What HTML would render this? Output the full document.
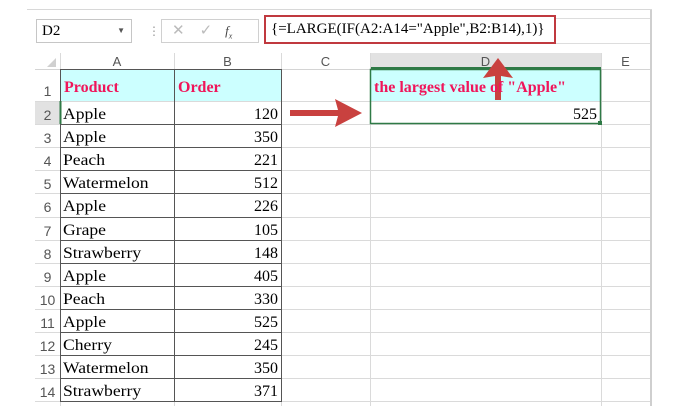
<!DOCTYPE html><html><head><style>
body{margin:0;width:680px;height:416px;background:#fff;position:relative;overflow:hidden;font-family:"Liberation Serif",serif}
.a{position:absolute}
.hd{font-family:"Liberation Sans",sans-serif;color:#555;font-size:13px;text-align:center}
.c{position:absolute;font-size:16px;color:#000;line-height:23px;height:23px;box-sizing:border-box;white-space:nowrap}
</style></head><body>
<div class="a" style="left:27px;top:9px;width:625px;height:1px;background:#d8d8d8"></div>
<div class="a" style="left:36px;top:19px;width:96px;height:24px;border:1px solid #c6c6c6;box-sizing:border-box;font-family:'Liberation Serif';font-size:15px;line-height:22px;padding-left:5px">D2<span style="position:absolute;right:6px;font-size:8px;color:#555">▼</span></div>
<div class="a" style="left:148px;top:24px;color:#999;font-size:12px">⋮</div>
<div class="a" style="left:161px;top:19px;width:98px;height:24px;border:1px solid #d0d0d0;box-sizing:border-box;color:#bbb;font-family:'Liberation Sans';font-size:15px;line-height:22px"><span style="margin-left:10px">✕</span><span style="margin-left:15px">✓</span><span style="margin-left:13px;color:#444;font-style:italic;font-family:'Liberation Serif';font-size:13px">f<sub style="font-size:8px">x</sub></span></div>
<div class="a" style="left:264px;top:15px;width:292px;height:29px;border:2px solid #c0393f;box-sizing:border-box;background:#fff;font-size:15px;line-height:25px;padding-left:5px">{=LARGE(IF(A2:A14="Apple",B2:B14),1)}</div>
<div class="a" style="left:556px;top:18px;width:94px;height:24px;border-top:1px solid #ddd;border-bottom:1px solid #ddd"></div>
<div class="a" style="left:650px;top:10px;width:2px;height:396px;background:#cfcfcf"></div>
<div class="a" style="left:35px;top:53px;width:615px;height:16px;background:#fff;border-bottom:1px solid #d4d4d4"></div>
<div class="a" style="left:370px;top:53px;width:231px;height:16px;background:#e2e2e2;border-bottom:2px solid #2f7a46;box-sizing:border-box"></div>
<div class="a" style="left:47px;top:58px;width:0;height:0;border-left:9px solid transparent;border-bottom:9px solid #d0d0d0"></div>
<div class="a hd" style="left:60px;top:54px;width:114px;line-height:16px">A</div>
<div class="a hd" style="left:174px;top:54px;width:107px;line-height:16px">B</div>
<div class="a hd" style="left:281px;top:54px;width:89px;line-height:16px">C</div>
<div class="a hd" style="left:370px;top:54px;width:231px;line-height:16px">D</div>
<div class="a hd" style="left:601px;top:54px;width:49px;line-height:16px">E</div>
<svg class="a" style="left:0;top:0" width="680" height="416">
<g stroke="#dadada" stroke-width="1">
<line x1="60.5" y1="53" x2="60.5" y2="406"/><line x1="174.5" y1="53" x2="174.5" y2="406"/><line x1="281.5" y1="53" x2="281.5" y2="406"/><line x1="370.5" y1="53" x2="370.5" y2="406"/><line x1="601.5" y1="53" x2="601.5" y2="406"/>
<line x1="35" y1="101.5" x2="650" y2="101.5"/>
</g>
<g id="rows" stroke="#dadada"></g>
<rect x="61" y="70" width="220" height="31" fill="#ccffff"/>
<rect x="371" y="70" width="230" height="31" fill="#ccffff"/>
<rect x="35" y="102" width="25" height="22" fill="#e2e2e2"/>
<g stroke="#555" stroke-width="1" fill="none">
<rect x="60.5" y="69.5" width="221" height="332"/>
<line x1="174.5" y1="69" x2="174.5" y2="402"/>
</g>
<rect x="370.5" y="69.5" width="230" height="54" fill="none" stroke="#2f7a46" stroke-width="1.5"/>
<rect x="598" y="121" width="4" height="4" fill="#2f7a46"/>
<line x1="60.5" y1="101" x2="60.5" y2="124" stroke="#2f7a46" stroke-width="2"/>
<path d="M290 110 L338 110 L335 99 L362 113 L335 127 L338 116 L290 116 Z" fill="#c9413f"/>
<path d="M495 100 L495 76 L483 78 L498 58 L513 78 L501 76 L501 100 Z" fill="#c9413f"/>
</svg>
<div id="cells"></div>
<div class="a hd" style="left:35px;top:80px;width:25px;line-height:23px;font-size:14px">1</div>
<div class="c" style="left:64px;top:76px;color:#f0155a;font-weight:bold;font-size:16px">Product</div>
<div class="c" style="left:178px;top:76px;color:#f0155a;font-weight:bold;font-size:16px">Order</div>
<div class="c" style="left:374px;top:76px;color:#f0155a;font-weight:bold;font-size:16px">the largest value of "Apple"</div>
<div class="c" style="left:370px;top:103px;width:227px;text-align:right">525</div>
<script>
var d=[["Apple",120],["Apple",350],["Peach",221],["Watermelon",512],["Apple",226],["Grape",105],["Strawberry",148],["Apple",405],["Peach",330],["Apple",525],["Cherry",245],["Watermelon",350],["Strawberry",371]];
var h="",g="";
for(var i=0;i<13;i++){var y=101+i*23.1;
h+='<div class="a hd" style="left:35px;top:'+(y+3)+'px;width:25px;line-height:23px;font-size:14px">'+(i+2)+'</div>';
h+='<div class="c" style="left:63px;top:'+(y+2)+'px;transform:scaleX(1.1);transform-origin:left">'+d[i][0]+'</div>';
h+='<div class="c" style="left:174px;top:'+(y+2)+'px;width:104px;text-align:right">'+d[i][1]+'</div>';
var yy=Math.round(y+23.1)+0.5;
g+='<line x1="35" y1="'+yy+'" x2="650" y2="'+yy+'"/><line x1="60" y1="'+yy+'" x2="282" y2="'+yy+'" stroke="#555"/>';}
document.getElementById("cells").innerHTML=h;
document.getElementById("rows").innerHTML=g;
</script>
</body></html>
